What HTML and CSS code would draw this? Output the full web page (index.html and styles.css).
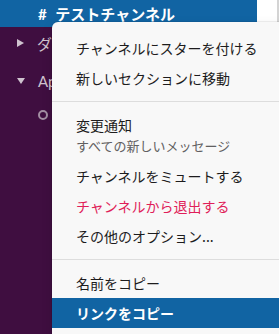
FILE: index.html
```html
<!DOCTYPE html>
<html lang="ja">
<head>
    <meta charset="UTF-8">
    <meta name="viewport" content="width=device-width, initial-scale=1.0">
    <title>チャンネルメニュー</title>
    <link rel="stylesheet" href="styles.css">
</head>
<body>
    <div class="topbar">
        <div class="channel-title"><span class="hash">#</span> テストチャンネル</div>
        <div class="topbar-side"></div>
    </div>

    <div class="sidebar">
        <div class="side-row">
            <span class="caret caret-right"></span>
            <span class="side-label">ダイレクトメッセージ</span>
        </div>
        <div class="side-row">
            <span class="caret caret-down"></span>
            <span class="side-label">Apps</span>
        </div>
        <div class="side-row side-app">
            <span class="status-dot"></span>
            <span class="side-label">Slackbot</span>
        </div>
    </div>

    <!-- Channel context menu -->
    <div class="menu">
        <div class="menu-item">チャンネルにスターを付ける</div>
        <div class="menu-item">新しいセクションに移動</div>
        <div class="menu-divider"></div>
        <div class="menu-item menu-item-two">
            <div>変更通知</div>
            <div class="menu-sub">すべての新しいメッセージ</div>
        </div>
        <div class="menu-item">チャンネルをミュートする</div>
        <div class="menu-item danger">チャンネルから退出する</div>
        <div class="menu-item">その他のオプション...</div>
        <div class="menu-divider"></div>
        <div class="menu-item">名前をコピー</div>
        <div class="menu-item active">リンクをコピー</div>
    </div>
</body>
</html>
```

FILE: styles.css
```css
body {
    margin: 0;
    width: 279px;
    height: 334px;
    overflow: hidden;
    position: relative;
    background-color: #3f0e40;
    font-family: Lato, "Noto Sans CJK JP", sans-serif;
}

.topbar {
    display: flex;
    height: 27px;
}

.channel-title {
    flex: 1;
    background-color: #1164a3;
    color: #fff;
    font-size: 15px;
    font-weight: bold;
    line-height: 28px;
    padding-left: 38px;
    white-space: nowrap;
}

.hash {
    margin-right: 5px;
}

.topbar-side {
    width: 20px;
    background-color: #fff;
    border-right: 2px solid #d4d4d4;
}

/* only the strip left of the menu is visible */
.sidebar {
    width: 52px;
    overflow: hidden;
    padding-top: 2px;
}

.side-row {
    display: flex;
    align-items: center;
    height: 28px;
    padding-left: 17px;
    color: #cfc3cf;
    font-size: 15px;
    white-space: nowrap;
}

.side-row + .side-row {
    margin-top: 10px;
}

.side-app {
    margin-top: 6px !important;
    padding-left: 38px;
}

.caret {
    flex-shrink: 0;
    width: 0;
    height: 0;
    margin-right: 13px;
}

.caret-right {
    border-top: 4px solid transparent;
    border-bottom: 4px solid transparent;
    border-left: 7px solid #cfc3cf;
}

.caret-down {
    border-left: 4px solid transparent;
    border-right: 4px solid transparent;
    border-top: 6px solid #cfc3cf;
}

.status-dot {
    flex-shrink: 0;
    width: 6px;
    height: 6px;
    border: 2px solid #a38ea3;
    border-radius: 50%;
    margin-right: 12px;
}

/* Context menu */
.menu {
    position: absolute;
    left: 52px;
    top: 22px;
    right: -10px;
    bottom: -20px;
    padding-top: 11px;
    background-color: #f8f8f8;
    border-radius: 6px 6px 0 0;
    box-shadow: 0 0 0 1px rgba(0, 0, 0, 0.06), 0 4px 12px rgba(0, 0, 0, 0.12);
    font-family: "Noto Sans CJK JP", sans-serif;
}

.menu-item {
    height: 30px;
    line-height: 30px;
    padding-left: 24px;
    font-size: 14px;
    color: #1d1c1d;
    white-space: nowrap;
}

.menu-item-two {
    height: auto;
    line-height: 22px;
    padding-top: 4px;
    padding-bottom: 5px;
}

.menu-sub {
    font-size: 13px;
    line-height: 20px;
    color: #616061;
}

.danger {
    color: #e01e5a;
}

.active {
    background-color: #1164a3;
    color: #fff;
    font-weight: bold;
}

.menu-divider {
    height: 1px;
    margin: 8px 0;
    background-color: #dddddd;
}
```
